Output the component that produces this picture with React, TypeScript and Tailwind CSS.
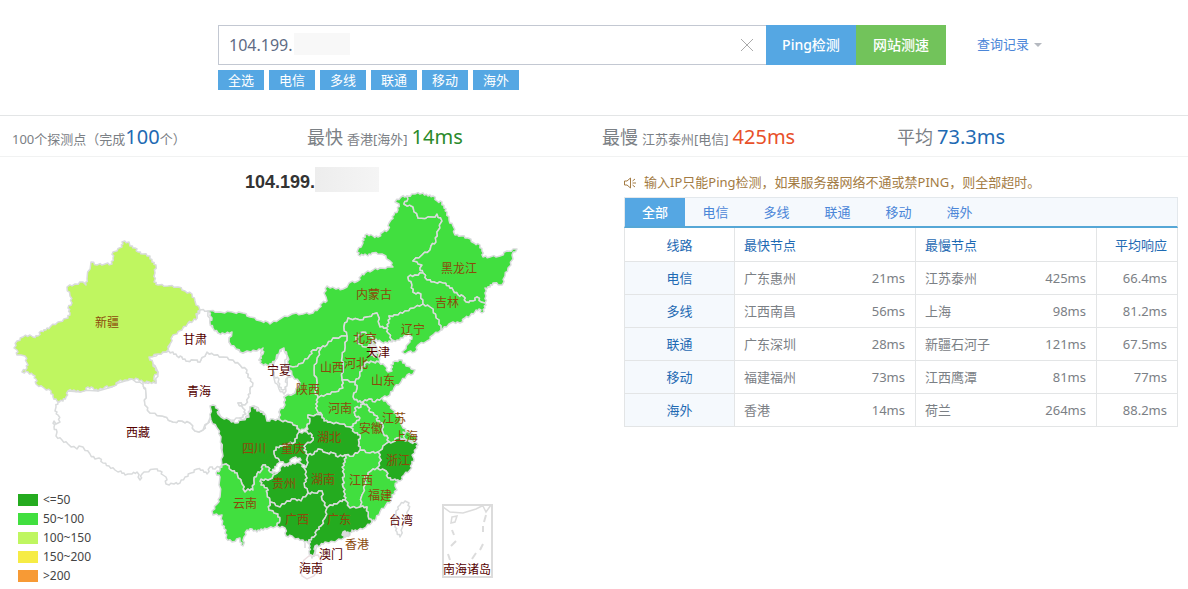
import React from "react";

type Province = { name: string; fill: string; points: string };
type Label = { name: string; x: number; y: number; dark?: boolean };

const DARK = "#24ab1f";
const GREEN = "#41df3f";
const LIME = "#bff660";
const NONE = "#ffffff";

const provinces: Province[] = [
  { name: "西藏", fill: NONE, points: "58,402 56,407 55,411 58,415 60,422 56,424 54,421 54,427 57,432 56,436 62,440 68,444 77,449 79,446 83,447 90,454 95,459 99,458 103,463 109,466 115,470 118,472 121,471 125,475 128,474 132,474 137,472 140,480 142,474 144,472 155,469 160,471 163,475 166,477 166,484 174,484 180,483 185,477 191,473 197,469 203,470 207,474 210,467 215,469 222,465 222,437 218,428 211,418 207,424 203,430 199,432 195,431 190,423 182,421 173,422 162,416 150,413 145,405 146,393 144,385 132,379 98,391 68,391" },
  { name: "青海", fill: NONE, points: "149,357 166,352 173,352 177,356 182,357 186,361 195,360 200,362 207,352 214,355 223,357 233,360 240,365 247,370 248,377 253,383 250,391 249,397 245,405 238,403 243,408 246,414 240,418 230,420 221,417 213,405 210,418 203,430 199,432 195,431 190,423 182,421 173,422 162,416 150,413 145,405 146,393 143,382 156,383 158,372" },
  { name: "甘肃", fill: NONE, points: "200,310 208,311 210,323 218,333 232,332 229,342 243,353 263,348 259,360 267,365 275,360 272,367 274,378 279,389 284,394 286,391 287,379 292,375 300,383 295,393 284,397 285,405 279,412 280,420 267,421 263,412 254,406 250,407 249,415 242,420 240,418 246,414 243,408 238,403 245,405 249,397 250,391 253,383 248,377 247,370 240,365 233,360 223,357 214,355 207,352 200,362 195,360 186,361 182,357 177,356 173,352 166,352 173,335 188,323 197,318" },
  { name: "宁夏", fill: NONE, points: "279,352 283,348 287,355 285,364 288,368 293,375 286,379 287,386 283,390 279,387 279,379 274,376 273,367" },
  { name: "新疆", fill: LIME, points: "122,242 129,242 130,246 135,248 138,252 143,254 150,256 152,262 156,265 155,273 154,282 158,285 168,286 178,287 185,291 192,294 195,301 200,310 196,314 197,318 193,321 188,323 182,330 173,335 170,344 166,352 158,354 149,357 153,363 153,366 158,372 154,377 156,383 149,382 143,382 138,379 132,379 125,380 118,382 114,386 110,387 105,387 98,391 93,388 88,387 84,391 80,392 74,390 68,391 66,397 63,401 57,401 53,397 51,391 44,388 36,384 36,379 33,375 28,372 22,372 27,368 27,363 25,356 21,355 17,355 17,350 14,348 17,341 23,337 30,335 33,337 38,336 41,331 46,330 50,327 58,322 68,318 70,313 68,308 72,303 70,296 67,287 75,284 83,282 86,285 87,279 91,262 97,265 105,264 112,264 113,258 113,252 122,247" },
  { name: "内蒙古", fill: GREEN, points: "208,311 220,312 232,312 243,313 250,317 261,321 268,322 270,324 280,319 292,314 303,314 313,313 319,308 322,303 327,301 326,297 324,293 327,286 336,289 343,289 347,287 349,283 358,281 361,276 365,273 373,270 380,268 393,267 390,261 382,254 372,253 368,256 365,254 360,256 357,252 363,243 363,238 367,234 373,236 378,237 383,232 388,230 389,223 391,220 394,215 398,210 399,204 395,202 401,197 407,196 408,199 404,204 413,207 418,218 435,217 437,214 442,221 437,232 436,242 431,246 430,250 422,255 413,261 422,265 420,268 423,273 415,275 408,277 412,285 413,292 421,294 423,304 414,308 405,311 398,315 389,316 389,323 386,328 380,327 377,313 367,317 360,320 348,318 344,327 347,336 333,338 327,345 321,348 313,350 310,355 303,363 293,367 289,366 287,355 284,348 280,350 276,359 272,364 267,365 262,364 259,360 263,354 263,348 257,351 247,351 243,353 236,349 229,342 232,332 225,334 218,333 213,328 210,323 212,318" },
  { name: "黑龙江", fill: GREEN, points: "407,196 415,194 423,193 428,196 433,196 437,201 442,202 444,208 447,212 449,220 453,226 455,235 461,236 468,238 474,243 480,245 482,251 483,257 490,257 500,256 507,251 517,249 512,255 513,259 508,268 505,276 502,285 493,283 490,287 485,288 486,296 485,303 481,302 477,297 473,301 466,302 463,296 458,295 453,290 449,286 443,283 434,282 427,280 423,273 420,268 422,265 413,261 422,255 430,250 431,246 436,242 437,232 442,221 437,214 435,217 418,218 413,207 404,204 408,199" },
  { name: "吉林", fill: GREEN, points: "408,277 415,275 423,273 427,280 434,282 443,283 449,286 453,290 458,295 463,296 466,302 473,301 477,297 481,302 485,303 485,308 482,313 479,309 475,312 470,316 465,318 460,323 453,322 449,324 442,330 441,330 439,320 436,318 433,309 430,307 423,304 421,294 413,292 412,285" },
  { name: "辽宁", fill: GREEN, points: "423,304 430,307 433,309 436,318 439,320 441,330 433,335 427,341 418,345 415,352 408,352 405,354 402,352 410,342 412,337 408,334 403,338 397,340 392,342 392,340 388,333 386,328 389,323 389,316 398,315 405,311 414,308" },
  { name: "河北", fill: GREEN, points: "348,318 360,320 367,317 377,313 380,327 386,328 388,333 392,340 388,343 381,342 376,339 374,345 379,354 379,362 373,362 367,362 362,367 360,376 355,382 342,380 343,366 342,357 345,347 347,336 344,327" },
  { name: "北京", fill: GREEN, points: "358,335 363,332 369,335 373,338 372,344 365,347 359,344 356,340" },
  { name: "天津", fill: "#e4ecdf", points: "371,342 375,345 378,353 374,357 370,353" },
  { name: "山西", fill: GREEN, points: "347,336 345,347 342,357 343,366 342,380 343,388 335,392 327,394 318,398 315,391 317,383 314,370 317,358 321,348 327,345 333,338" },
  { name: "陕西", fill: GREEN, points: "321,348 317,358 314,370 317,383 315,391 318,398 316,404 317,410 322,415 308,415 310,421 307,427 299,432 297,426 288,422 280,420 279,412 285,405 284,397 295,393 300,383 292,375 289,366 293,367 303,363 310,355 313,350" },
  { name: "山东", fill: GREEN, points: "373,362 379,362 385,366 388,372 392,371 391,365 395,361 402,360 406,366 415,370 413,374 407,375 401,382 394,388 390,395 382,398 375,402 369,399 363,402 358,402 353,397 357,388 355,382 360,376 362,367 367,362" },
  { name: "河南", fill: GREEN, points: "318,398 327,394 335,392 343,388 342,380 355,382 357,388 353,397 358,402 363,402 361,407 355,408 355,415 360,418 356,423 350,427 340,424 330,422 324,421 322,415 317,410 316,404" },
  { name: "江苏", fill: GREEN, points: "363,402 369,399 375,402 382,398 388,404 393,410 396,414 400,418 401,424 403,428 408,432 414,436 410,442 403,439 397,438 393,442 387,443 388,438 383,433 382,423 377,421 377,416 370,412 368,407" },
  { name: "上海", fill: GREEN, points: "403,432 409,432 417,438 414,442 405,439" },
  { name: "安徽", fill: GREEN, points: "363,402 368,407 370,412 377,416 377,421 382,423 383,433 388,438 387,443 378,452 370,453 360,450 359,443 360,435 355,433 350,427 356,423 360,418 355,415 355,408 361,407" },
  { name: "浙江", fill: DARK, points: "387,443 393,442 397,438 403,439 410,442 417,443 417,448 412,455 414,459 412,464 410,470 404,475 400,481 393,480 388,478 386,471 377,468 381,460 378,452" },
  { name: "江西", fill: GREEN, points: "345,455 353,456 360,450 370,453 378,452 381,460 377,468 371,471 365,477 366,483 362,495 360,507 350,508 345,500 345,494 343,487 343,480 344,474 342,467 345,462" },
  { name: "福建", fill: GREEN, points: "377,468 386,471 388,478 393,480 398,480 395,486 397,490 392,495 391,501 386,505 380,512 376,519 372,522 368,516 367,507 360,507 362,495 366,483 365,477 371,471" },
  { name: "湖北", fill: DARK, points: "308,415 322,415 324,421 330,422 340,424 350,427 355,433 360,435 359,443 360,450 353,456 345,455 338,457 333,453 327,453 318,449 314,454 308,455 304,450 305,445 313,440 312,435 307,432 307,427 310,421" },
  { name: "湖南", fill: DARK, points: "308,455 314,454 318,449 327,453 333,453 338,457 345,455 345,462 342,467 344,474 343,480 343,487 345,494 345,500 340,501 337,504 330,505 327,508 322,500 322,491 314,493 308,493 304,483 307,478 304,468 306,467" },
  { name: "重庆", fill: DARK, points: "297,426 299,432 307,432 312,435 313,440 305,445 304,450 308,455 306,467 300,463 300,458 293,458 287,464 280,462 274,454 276,447 283,446 288,444 295,442 297,435" },
  { name: "四川", fill: DARK, points: "210,406 213,405 218,409 218,414 221,417 230,420 235,423 242,420 249,417 250,407 254,406 257,411 263,412 266,417 267,421 273,419 280,420 288,422 297,426 299,432 297,435 295,442 288,444 283,446 276,447 274,454 280,462 277,464 275,469 270,472 268,467 263,465 261,471 257,474 254,480 253,490 248,489 245,492 242,484 237,473 232,471 226,464 222,465 222,450 221,437 217,428 211,420" },
  { name: "贵州", fill: DARK, points: "277,473 283,465 288,466 292,463 300,463 304,468 307,478 304,483 308,493 301,501 295,499 287,501 280,507 270,502 267,493 267,488 261,485 261,479 268,480" },
  { name: "云南", fill: GREEN, points: "222,465 226,464 232,471 237,473 242,484 245,492 248,489 253,490 254,480 257,474 261,471 263,465 268,467 270,472 277,473 268,480 261,479 261,485 267,488 267,493 270,502 269,510 278,514 280,520 277,526 267,529 261,529 257,532 252,529 247,530 244,537 243,546 240,542 240,538 232,542 226,538 226,530 222,525 222,515 213,515 212,511 217,504 220,497 220,477 216,473 220,470" },
  { name: "广西", fill: DARK, points: "270,502 280,507 287,501 295,499 301,501 308,493 314,493 322,491 322,500 327,508 325,518 321,526 317,530 314,537 309,540 308,543 303,540 295,539 292,536 286,536 285,528 277,526 280,520 278,514 269,510" },
  { name: "广东", fill: DARK, points: "327,508 330,505 337,504 340,501 345,500 350,508 360,507 367,507 368,516 372,522 366,527 357,531 352,530 350,535 345,537 335,542 325,542 320,546 315,546 315,554 312,558 309,551 310,546 309,540 314,537 317,530 321,526 325,518" },
  { name: "香港", fill: "#dddddd", points: "343,532 348,532 349,535 345,537 342,535" },
  { name: "台湾", fill: NONE, points: "405,501 409,503 409,509 405,519 403,526 400,537 397,532 395,527 394,520 396,511 400,505" },
];

const labels: Label[] = [
  { name: "新疆", x: 107, y: 322 },
  { name: "甘肃", x: 195, y: 339, dark: true },
  { name: "青海", x: 199, y: 391, dark: true },
  { name: "西藏", x: 138, y: 432, dark: true },
  { name: "宁夏", x: 279, y: 370, dark: true },
  { name: "陕西", x: 308, y: 389 },
  { name: "内蒙古", x: 374, y: 294 },
  { name: "黑龙江", x: 459, y: 268 },
  { name: "吉林", x: 447, y: 302 },
  { name: "辽宁", x: 413, y: 329 },
  { name: "北京", x: 365, y: 338 },
  { name: "天津", x: 378, y: 352, dark: true },
  { name: "山西", x: 332, y: 367 },
  { name: "河北", x: 356, y: 363 },
  { name: "山东", x: 383, y: 380 },
  { name: "河南", x: 340, y: 408 },
  { name: "安徽", x: 371, y: 428 },
  { name: "江苏", x: 394, y: 418 },
  { name: "上海", x: 406, y: 436 },
  { name: "浙江", x: 398, y: 460 },
  { name: "江西", x: 361, y: 480 },
  { name: "福建", x: 380, y: 495 },
  { name: "湖北", x: 329, y: 437 },
  { name: "湖南", x: 323, y: 479 },
  { name: "重庆", x: 293, y: 448 },
  { name: "四川", x: 254, y: 448 },
  { name: "贵州", x: 284, y: 483 },
  { name: "云南", x: 245, y: 503 },
  { name: "广西", x: 297, y: 519 },
  { name: "广东", x: 339, y: 519 },
  { name: "香港", x: 357, y: 544 },
  { name: "澳门", x: 331, y: 554, dark: true },
  { name: "海南", x: 311, y: 568, dark: true },
  { name: "台湾", x: 401, y: 520, dark: true },
  { name: "南海诸岛", x: 467, y: 569, dark: true },
];

const legend = [
  { color: "bg-[#24ab1f]", text: "<=50" },
  { color: "bg-[#41df3f]", text: "50~100" },
  { color: "bg-[#bff660]", text: "100~150" },
  { color: "bg-[#f6ec45]", text: "150~200" },
  { color: "bg-[#f79a35]", text: ">200" },
];

const rows = [
  ["电信", "广东惠州", "21ms", "江苏泰州", "425ms", "66.4ms"],
  ["多线", "江西南昌", "56ms", "上海", "98ms", "81.2ms"],
  ["联通", "广东深圳", "28ms", "新疆石河子", "121ms", "67.5ms"],
  ["移动", "福建福州", "73ms", "江西鹰潭", "81ms", "77ms"],
  ["海外", "香港", "14ms", "荷兰", "264ms", "88.2ms"],
];

const filters = ["全选", "电信", "多线", "联通", "移动", "海外"];
const tabs = ["全部", "电信", "多线", "联通", "移动", "海外"];

// Bend every longer border segment a little. The bend depends only on the two
// end points, so neighbouring provinces still share the same edge.
const roughen = (points: string) => {
  const pts = points.split(" ").map((p) => p.split(",").map(Number));
  const out: string[] = [];
  pts.forEach(([ax, ay], i) => {
    const [bx, by] = pts[(i + 1) % pts.length];
    out.push(`${ax},${ay}`);
    const len = Math.hypot(bx - ax, by - ay);
    if (len < 5) return;
    const flip = ax < bx || (ax === bx && ay < by) ? 1 : -1;
    const side = (ax + ay + bx + by) % 2 === 0 ? flip : -flip;
    const nx = (-(by - ay) / len) * side;
    const ny = ((bx - ax) / len) * side;
    const at = (t: number, d: number) =>
      out.push(`${(ax + (bx - ax) * t + nx * d).toFixed(1)},${(ay + (by - ay) * t + ny * d).toFixed(1)}`);
    at(0.4, flip === 1 ? 1 : -0.7);
    at(0.6, flip === 1 ? -0.7 : 1);
  });
  return out.join(" ");
};

const SearchBar = () => {
  return (
    <header className="pt-[25px] pl-[218px] pr-[146px]">
      <form className="flex h-10" onSubmit={(e) => e.preventDefault()}>
        <div className="relative flex-1 border border-r-0 border-[#c3c8d2]">
          <input
            aria-label="IP"
            defaultValue="104.199."
            className="h-full w-full px-[10px] text-base text-[#5f6b85] outline-none"
          />
          <span className="absolute left-[75px] top-[7px] h-[22px] w-[56px] bg-[#f8f8f8]" />
          <button type="button" aria-label="清空" className="absolute right-3 top-3">
            <svg width="14" height="14" viewBox="0 0 14 14" stroke="#aaa" fill="none">
              <path d="M1 1l12 12M13 1L1 13" />
            </svg>
          </button>
        </div>
        <button className="w-[90px] bg-[#55a7e3] text-sm font-medium text-white">Ping检测</button>
        <button type="button" className="w-[90px] bg-[#72c35b] text-sm font-medium text-white">网站测速</button>
        <a href="#history" className="ml-[31px] flex items-center gap-[5px] text-[13px] text-[#4b86d8]">
          查询记录
          <svg width="8" height="4" viewBox="0 0 8 4" fill="#b5b9c0">
            <path d="M0 0h8L4 4z" />
          </svg>
        </a>
      </form>
      <div className="mt-[5px] flex gap-[5px]">
        {filters.map((item) => (
          <button key={item} className="h-5 w-[46px] bg-[#55a7e3] text-[13px] leading-5 text-white">
            {item}
          </button>
        ))}
      </div>
    </header>
  );
};

const Summary = () => {
  return (
    <section className="mt-[25px] grid h-[42px] grid-cols-[1fr_1fr_1fr_291px] items-center border-t border-b border-t-[#e3e5e6] border-b-[#f1f2f2] pt-[2px] pl-3 text-[13px] whitespace-nowrap text-[#7b8085]">
      <p>
        100个探测点（完成<span className="text-xl text-[#1e6ab3]">100</span>个）
      </p>
      <p className="flex items-baseline gap-1">
        <span className="text-lg">最快</span>
        <span>香港[海外]</span>
        <span className="text-xl text-[#2a8a2a]">14ms</span>
      </p>
      <p className="flex items-baseline gap-1">
        <span className="text-lg">最慢</span>
        <span>江苏泰州[电信]</span>
        <span className="text-xl text-[#e8502a]">425ms</span>
      </p>
      <p className="flex items-baseline gap-1">
        <span className="text-lg">平均</span>
        <span className="text-xl text-[#1e6ab3]">73.3ms</span>
      </p>
    </section>
  );
};

const ChinaMap = () => {
  return (
    <section className="relative w-[540px] shrink-0">
      <div className="flex h-[35px] items-end pl-[245px]">
        <h2 className="font-['Liberation_Sans',sans-serif] text-lg leading-5 font-bold text-[#333]">104.199.</h2>
        <span className="h-[25px] w-16 bg-linear-to-r from-[#ededed] to-[#f5f5f5]" />
      </div>
      <svg width="540" height="397" viewBox="0 192 540 397" className="block">
        <g stroke="#d9dbdc" strokeWidth="1.5" strokeLinejoin="round">
          {provinces.map((p) => (
            <polygon key={p.name} points={roughen(p.points)} fill={p.fill} />
          ))}
        </g>
        <g fill="none" stroke="#dcdcdc" strokeWidth="1.5">
          <path stroke="#ecdfe2" d="M304 560l5-4 9-1 3 5-2 8-5 8-7 3-5-3-2-7z" />
          <path d="M305 543v5M317 546l-4 11" />
          {/* 南海诸岛 inset */}
          <path strokeWidth="2" d="M443 505h49v72h-49z" />
          <path d="M443 507l7 5 13 1 13-4 8-4M483 506l3 6 5-7M452 517l5-1-2 6-4 1z" />
          <path strokeWidth="2" d="M486 515l-2 7M483 526v6M483 544l-3 6M476 553l-4 6M452 530l2 5M456 541l-5 5M448 554l2 6" />
        </g>
        <g textAnchor="middle" className="text-xs">
          {labels.map((l) => (
            <text key={l.name} x={l.x} y={l.y + 5} fill={l.dark ? "#550000" : "#8b4a0b"}>
              {l.name}
            </text>
          ))}
        </g>
      </svg>
      <ul className="absolute bottom-1 left-[18px] text-xs text-[#444]">
        {legend.map((item) => (
          <li key={item.text} className="flex h-[19px] items-center gap-[5px]">
            <span className={`h-3 w-5 ${item.color}`} />
            {item.text}
          </li>
        ))}
      </ul>
    </section>
  );
};

const ResultTable = () => {
  return (
    <section className="ml-[84px] mr-[10px] min-w-0 flex-1 pt-[15px] text-[13px]">
      <p className="flex h-[25px] items-center gap-2 pb-[3px] text-[#a37b43]">
        <svg width="12" height="12" viewBox="0 0 12 12" fill="none" stroke="currentColor">
          <path d="M.5 4v4H3l3.500 3V1L3 4zM8.500 4l2.500-2M8.500 6H12M8.500 8l2.500 2" />
        </svg>
        输入IP只能Ping检测，如果服务器网络不通或禁PING，则全部超时。
      </p>
      <div className="flex h-[31px] border border-b-2 border-[#e3e8ec] border-b-[#55a7d6] bg-[#f5f9fd]">
        {tabs.map((tab, i) => (
          <button
            key={tab}
            className={i === 0 ? "w-[60px] bg-[#55a7e3] pt-[2px] font-medium text-white" : "w-[61px] pt-[2px] text-[#4b86d8]"}
          >
            {tab}
          </button>
        ))}
      </div>
      <table className="w-full table-fixed border-collapse text-[#7b8085]">
        <colgroup>
          <col className="w-[110px]" />
          <col />
          <col />
          <col className="w-[81px]" />
        </colgroup>
        <thead>
          <tr className="h-[33px] text-[#1e6ab3]">
            <th className="border border-t-0 border-[#e3e5e6] pt-[2px] font-normal">线路</th>
            <th className="border border-t-0 border-[#e3e5e6] px-[9px] pt-[2px] text-left font-normal">最快节点</th>
            <th className="border border-t-0 border-[#e3e5e6] px-[9px] pt-[2px] text-left font-normal">最慢节点</th>
            <th className="border border-t-0 border-[#e3e5e6] px-[10px] pt-[2px] text-right font-normal">平均响应</th>
          </tr>
        </thead>
        <tbody>
          {rows.map(([line, fast, fastMs, slow, slowMs, avg]) => (
            <tr key={line} className="h-[33px]">
              <th className="border border-[#e3e5e6] bg-[#f5f9fd] pt-[2px] font-normal text-[#1e6ab3]">{line}</th>
              <td className="border border-[#e3e5e6] pt-[2px] pr-[10px] pl-[9px]">
                <div className="flex justify-between">
                  <span>{fast}</span>
                  <span>{fastMs}</span>
                </div>
              </td>
              <td className="border border-[#e3e5e6] pt-[2px] pr-[10px] pl-[9px]">
                <div className="flex justify-between">
                  <span>{slow}</span>
                  <span>{slowMs}</span>
                </div>
              </td>
              <td className="border border-[#e3e5e6] px-[10px] pt-[2px] text-right">{avg}</td>
            </tr>
          ))}
        </tbody>
      </table>
    </section>
  );
};

const App = () => {
  return (
    <div className="bg-white font-['Noto_Sans','Noto_Sans_CJK_SC',sans-serif]">
      <SearchBar />
      <Summary />
      <main className="flex items-start">
        <ChinaMap />
        <ResultTable />
      </main>
    </div>
  );
};

export default App;
